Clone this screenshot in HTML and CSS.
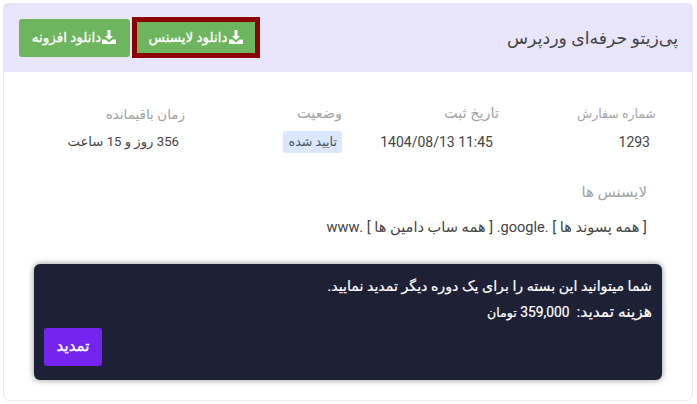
FILE: index.html
```html
<!DOCTYPE html>
<html lang="fa" dir="rtl">
<head>
<meta charset="utf-8">
<title>پی‌زیتو حرفه‌ای وردپرس</title>
<link rel="stylesheet" href="styles.css">
</head>
<body>
<main class="card">
  <header class="card-head">
    <h1 class="title">پی‌زیتو حرفه‌ای وردپرس</h1>
    <div class="actions">
      <a class="btn btn-marked"><svg class="ico" viewBox="0 0 16 16"><path d="M6.500 1h3v6h2.600L8 11 3.900 7h2.600z"/><path d="M1 10.500h3.500L8 13.500l3.500-3H15V15H1z"/></svg>دانلود لایسنس</a>
      <a class="btn"><svg class="ico" viewBox="0 0 16 16"><path d="M6.500 1h3v6h2.600L8 11 3.900 7h2.600z"/><path d="M1 10.500h3.500L8 13.500l3.500-3H15V15H1z"/></svg>دانلود افزونه</a>
    </div>
  </header>
  <section class="card-body">
    <dl class="facts">
      <div class="fact"><dt class="label-sm">شماره سفارش</dt><dd>1293</dd></div>
      <div class="fact"><dt>تاریخ ثبت</dt><dd dir="ltr" class="ltr-val">1404/08/13 11:45</dd></div>
      <div class="fact"><dt>وضعیت</dt><dd class="flush"><span class="badge">تایید شده</span></dd></div>
      <div class="fact"><dt class="label-md">زمان باقیمانده</dt><dd class="remain">356 روز و 15 ساعت</dd></div>
    </dl>
    <div class="licenses">
      <div class="lic-label">لایسنس ها</div>
      <div class="lic-value">[ همه پسوند ها ] .google. [ همه ساب دامین ها ] .www</div>
    </div>
    <aside class="renew">
      <p class="renew-line">شما میتوانید این بسته را برای یک دوره دیگر تمدید نمایید.</p>
      <p class="renew-line"><span class="cost-label">هزینه تمدید:</span>&nbsp; <span class="cost-num">359,000</span> <span class="cost-unit">تومان</span></p>
      <div class="renew-foot"><a class="btn-renew">تمدید</a></div>
    </aside>
  </section>
</main>
</body>
</html>
```
FILE: styles.css
```css
* { box-sizing: border-box; }
html, body { margin: 0; padding: 0; background: #fff; }
body {
  width: 697px;
  height: 404px;
  overflow: hidden;
  padding: 3px 4px 3px 3px;
  font-family: Roboto, "DejaVu Sans", sans-serif;
  color: #444;
}
.card {
  height: 398px;
  border: 1px solid #e8e8f0;
  border-radius: 6px;
  background: #fff;
}
.card-head {
  height: 69px;
  margin: -1px -1px 0;
  background: #e9e6fb;
  border-radius: 6px 6px 0 0;
  display: flex;
  align-items: center;
  justify-content: space-between;
  padding: 0 15px 0 16px;
}
.title { margin: 0; font-size: 17.300px; font-weight: 400; color: #444; }
.actions { display: flex; gap: 2px; align-items: center; }
.btn {
  display: flex;
  align-items: center;
  justify-content: center;
  width: 111px;
  height: 38px;
  padding-bottom: 2px;
  background: #6db55f;
  color: #fff;
  font-size: 13.500px;
  font-weight: 400;
  -webkit-text-stroke: 0.3px #fff;
  border-radius: 3px;
}
.btn-marked {
  width: 118px;
  height: 31px;
  border-radius: 0;
  outline: 5px solid #8b0000;
  outline-offset: 0;
  margin: 0 5px;
}
.ico { width: 16px; height: 16px; fill: #fff; flex: none; }
.card-body { padding: 0; }
.facts {
  margin: 33px 0 0;
  height: 48px;
  display: grid;
  grid-template-columns: repeat(4, 157px);
  padding-right: 36px;
}
.fact { min-width: 0; }
.fact dt { height: 18px; font-size: 14.500px; color: #a3a3a3; line-height: 18px; }
.fact .label-sm { font-size: 12.500px; }
.fact .label-md { font-size: 13.500px; }
.fact dd { margin: 10px 6px 0 0; height: 18px; font-size: 14px; color: #444; line-height: 18px; }
.fact .flush { margin: 8px 0 0; height: 22px; line-height: 22px; }
.fact .remain { font-size: 13.200px; }
.ltr-val { text-align: right; }
.badge {
  display: block;
  width: fit-content;
  height: 22px;
  background: #dbe7fd;
  color: #4b5563;
  font-size: 12.700px;
  line-height: 22px;
  padding: 0 5px;
  border-radius: 3px;
}
.licenses { margin-top: 30px; height: 53px; padding-right: 45px; }
.lic-label { height: 18px; font-size: 14.900px; color: #a3a3a3; line-height: 18px; }
.lic-value { margin-top: 17px; height: 18px; font-size: 14.600px; color: #444; line-height: 18px; }
.renew {
  margin: 28px 30px 0;
  height: 116px;
  background: #1e2035;
  border-radius: 6px;
  box-shadow: 0 0 6px rgba(0,0,0,.45);
  padding: 13px 10px 14px;
  color: #fff;
  display: flex;
  flex-direction: column;
}
.renew-line { margin: 0; height: 18px; font-size: 14.200px; line-height: 18px; font-weight: 400; -webkit-text-stroke: 0.2px #fff; }
.renew-line + .renew-line { margin-top: 8px; }
.cost-label { font-size: 15.500px; }
.cost-num { font-size: 13.800px; }
.cost-unit { font-size: 12.500px; }
.renew-foot { margin-top: auto; display: flex; justify-content: flex-end; }
.btn-renew {
  width: 58px;
  height: 38px;
  padding-bottom: 3px;
  background: #7424ee;
  border-radius: 3px;
  color: #fff;
  font-size: 15px;
  font-weight: 400;
  -webkit-text-stroke: 0.4px #fff;
  display: flex;
  align-items: center;
  justify-content: center;
}
```
